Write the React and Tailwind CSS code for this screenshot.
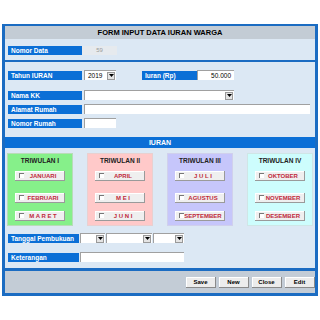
import React from "react";

const F = { fontFamily: '"Liberation Sans", Arial, sans-serif' };

function Label({ children, w = "w-[74px]" }) {
  return (
    <div className={`${w} h-[9px] bg-[#0b6fd6] text-white font-bold text-[6.5px] leading-[9px] pl-[3px] shrink-0`}>
      {children}
    </div>
  );
}

function Input({ w, children, right }) {
  return (
    <div
      className={`${w} h-[10px] bg-white border-t border-l border-[#a0a0a0] text-[6.5px] leading-[9px] text-black ${right ? "text-right pr-[3px]" : "pl-[3px]"}`}
    >
      {children}
    </div>
  );
}

function DropBtn() {
  return (
    <div className="w-[8px] h-[8px] bg-[#e4e4e4] border border-[#999] flex items-center justify-center shrink-0">
      <svg width="5" height="3" viewBox="0 0 5 3">
        <path d="M0 0h5L2.5 3z" fill="#000" />
      </svg>
    </div>
  );
}

function Select({ w, children }) {
  return (
    <div className={`${w} h-[10px] bg-white border-t border-l border-[#a0a0a0] flex items-center justify-between pl-[3px] pr-[1px] text-[6.5px] text-black`}>
      <span>{children}</span>
      <DropBtn />
    </div>
  );
}

function Month({ children }) {
  return (
    <div className="w-[50px] h-[10px] bg-[#efefef] border-r border-b border-[#9a9a9a] shadow-[inset_1px_1px_0_#fff] flex items-center">
      <div className="w-[5px] h-[5px] ml-[4px] border-t border-l border-[#777] bg-white shrink-0" />
      <div className="flex-1 text-center text-[6px] font-bold text-[#c0283a] leading-[10px] pr-[2px]">{children}</div>
    </div>
  );
}

function Quarter({ title, bg, border, months }) {
  return (
    <div className={`w-[66px] h-[73px] ${bg} border ${border} flex flex-col items-center`}>
      <div className="text-[6.5px] font-bold text-[#222] mt-[3px] leading-[8px]">{title}</div>
      <div className="mt-[6px]"><Month>{months[0]}</Month></div>
      <div className="mt-[12px]"><Month>{months[1]}</Month></div>
      <div className="mt-[8px]"><Month>{months[2]}</Month></div>
    </div>
  );
}

function FootBtn({ children }) {
  return (
    <div className="w-[30px] h-[11px] bg-[#ececec] border-r border-b border-[#8a8a8a] shadow-[inset_1px_1px_0_#fff] text-[6px] font-bold text-black text-center leading-[11px]">
      {children}
    </div>
  );
}

export default function App() {
  return (
    <div style={F} className="w-[320px] h-[320px] bg-white pt-[24px] px-[2px]">
      <div className="w-[316px] border-x-[3px] border-t-[2px] border-b-[3px] border-[#1b6cc2] bg-[#dce8f4] flex flex-col">
        <div className="h-[13px] bg-[#c3ccd5] text-center text-[7.5px] font-bold text-black leading-[13px]">
          FORM INPUT DATA IURAN WARGA
        </div>
        <div className="h-[21px] flex items-start pt-[7px] pl-[3px]">
          <Label>Nomor Data</Label>
          <div className="w-[35px] h-[9px] bg-[#e6eaee] text-[6px] text-[#9a9a9a] text-center leading-[9px]">59</div>
        </div>
        <div className="h-[2px] bg-[#1b6cc2]" />
        <div className="h-[75px] flex flex-col pl-[3px] pt-[8px]">
          <div className="flex items-center h-[10px]">
            <Label>Tahun IURAN</Label>
            <div className="ml-[2px]"><Select w="w-[32px]">2019</Select></div>
            <div className="ml-[26px]"><Label w="w-[55px]">Iuran (Rp)</Label></div>
            <Input w="w-[37px]" right>50.000</Input>
          </div>
          <div className="flex items-center h-[10px] mt-[10px]">
            <Label>Nama KK</Label>
            <div className="ml-[2px]"><Select w="w-[150px]"></Select></div>
          </div>
          <div className="flex items-center h-[10px] mt-[4px]">
            <Label>Alamat Rumah</Label>
            <div className="ml-[2px]"><Input w="w-[226px]" /></div>
          </div>
          <div className="flex items-center h-[10px] mt-[4px]">
            <Label>Nomor Rumah</Label>
            <div className="ml-[2px]"><Input w="w-[32px]" /></div>
          </div>
        </div>
        <div className="h-[11px] bg-[#0b6fd6] text-white text-center font-bold text-[7px] leading-[11px]">IURAN</div>
        <div className="h-[120px] flex flex-col pl-[2px] pt-[5px]">
          <div className="flex gap-[14px]">
            <Quarter title="TRIWULAN I" bg="bg-[#86f08a]" border="border-[#b8dcb8]" months={["JANUARI", "FEBRUARI", "M A R E T"]} />
            <Quarter title="TRIWULAN II" bg="bg-[#ffc9c9]" border="border-[#e8d0d0]" months={["APRIL", "M E I", "J U N I"]} />
            <Quarter title="TRIWULAN III" bg="bg-[#c6c6fb]" border="border-[#d0d0ec]" months={["J U L I", "AGUSTUS", "SEPTEMBER"]} />
            <Quarter title="TRIWULAN IV" bg="bg-[#cdfdfd]" border="border-[#cfe6e6]" months={["OKTOBER", "NOVEMBER", "DESEMBER"]} />
          </div>
          <div className="flex items-center h-[10px] mt-[7px] pl-[1px]">
            <Label w="w-[71px]">Tanggal Pembukuan</Label>
            <div className="ml-[1px] flex gap-[1px]">
              <Select w="w-[25px]"></Select>
              <Select w="w-[46px]"></Select>
              <Select w="w-[31px]"></Select>
            </div>
          </div>
          <div className="flex items-center h-[10px] mt-[9px] pl-[1px]">
            <Label w="w-[71px]">Keterangan</Label>
            <div className="ml-[1px]"><Input w="w-[104px]" /></div>
          </div>
        </div>
        <div className="h-[3px] bg-[#1b6cc2]" />
        <div className="h-[22px] bg-[#c3ccd6] flex items-center justify-end gap-[3px] pr-[-1px]">
          <FootBtn>Save</FootBtn>
          <FootBtn>New</FootBtn>
          <FootBtn>Close</FootBtn>
          <FootBtn>Edit</FootBtn>
        </div>
      </div>
    </div>
  );
}
